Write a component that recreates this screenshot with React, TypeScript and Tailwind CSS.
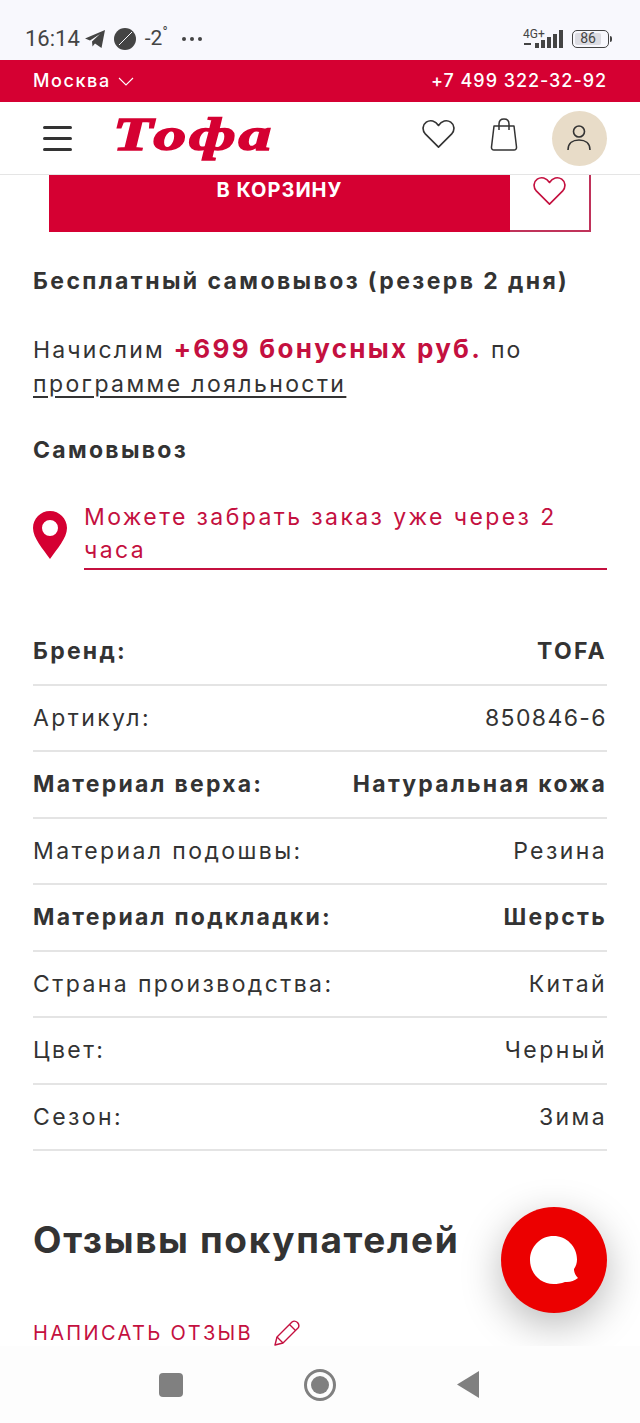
import React from 'react';

const HeartIcon: React.FC<{ className: string }> = ({ className }) => (
    <svg viewBox="0 0 34 30" fill="none" stroke="currentColor" strokeWidth="1.7" strokeLinejoin="round" className={className}>
        <path d="M17 28.5 L3.6 15.2 C-0.2 11.2 0.6 5.4 4.4 2.8 C8.6 0 13.8 1.4 17 6.2 C20.2 1.4 25.4 0 29.6 2.8 C33.4 5.4 34.2 11.2 30.4 15.2 Z" />
    </svg>
);

const specs = [
    { label: 'Бренд:', value: 'TOFA', bold: true },
    { label: 'Артикул:', value: '850846-6', bold: false, digits: true },
    { label: 'Материал верха:', value: 'Натуральная кожа', bold: true },
    { label: 'Материал подошвы:', value: 'Резина', bold: false },
    { label: 'Материал подкладки:', value: 'Шерсть', bold: true },
    { label: 'Страна производства:', value: 'Китай', bold: false },
    { label: 'Цвет:', value: 'Черный', bold: false },
    { label: 'Сезон:', value: 'Зима', bold: false },
];

export default function App() {
    return (
        <div className="w-[640px] h-[1423px] overflow-hidden flex flex-col bg-white text-[#333333] font-['Inter',sans-serif]">
            {/* Status bar */}
            <div className="h-[60px] shrink-0 bg-[#f8f8fd] flex items-center justify-between pt-[17px] pl-[25px] pr-[28px] text-[#444444] font-['Roboto',sans-serif]">
                <div className="flex items-center">
                    <span className="text-[22px] leading-none">16:14</span>
                    <svg viewBox="0 0 20 18" className="w-[20px] h-[18px] ml-[5px] fill-current">
                        <path d="M0 8.5 L20 0 L16.5 18 L10 13.5 L7.5 16.5 L7 11.5 L15 4 L5 10.5 Z" />
                    </svg>
                    <svg viewBox="0 0 22 22" className="w-[22px] h-[22px] ml-[9px]">
                        <circle cx="11" cy="11" r="11" fill="currentColor" />
                        <path d="M5 17 L18 4" stroke="#f8f8fd" strokeWidth="1" />
                    </svg>
                    <span className="text-[21px] leading-none ml-[9px]">-2</span>
                    <span className="text-[14px] leading-none -mt-[14px]">°</span>
                    <div className="flex gap-[4px] ml-[14px]">
                        <span className="w-[4px] h-[4px] rounded-full bg-[#444444]" />
                        <span className="w-[4px] h-[4px] rounded-full bg-[#444444]" />
                        <span className="w-[4px] h-[4px] rounded-full bg-[#444444]" />
                    </div>
                </div>
                <div className="flex items-center gap-[8px]">
                    <div className="relative w-[41px] h-[18px]">
                        <span className="absolute left-0 -top-[2px] text-[12px] leading-none">4G+</span>
                        <svg viewBox="0 0 41 18" className="w-[41px] h-[18px] fill-current">
                            <rect x="1" y="13" width="7" height="2" />
                            <rect x="12" y="13" width="4" height="5" />
                            <rect x="18" y="10" width="4" height="8" />
                            <rect x="24" y="7" width="4" height="11" />
                            <rect x="30" y="4" width="4" height="14" />
                            <rect x="36" y="0" width="4" height="18" />
                        </svg>
                    </div>
                    <div className="flex items-center gap-[1px]">
                        <div className="w-[37px] h-[18px] rounded-[5px] border-[1.5px] border-[#444444] p-[2px] flex">
                            <div className="w-[26px] bg-[#dcdce2] rounded-[2px] text-[14px] leading-[11px] text-center">86</div>
                        </div>
                        <span className="w-[2px] h-[6px] bg-[#444444] rounded-r" />
                    </div>
                </div>
            </div>

            {/* City and phone */}
            <div className="h-[42px] shrink-0 bg-[#d50032] text-white flex items-center justify-between px-[33px] pb-[2px] text-[18px] font-medium tracking-[1.6px]">
                <div className="flex items-center gap-[7px]">
                    <span>Москва</span>
                    <svg viewBox="0 0 16 9" fill="none" stroke="currentColor" strokeWidth="1.1" className="w-[16px] h-[9px] mt-[3px]">
                        <path d="M1 1 L8 8 L15 1" />
                    </svg>
                </div>
                <span className="tracking-[0.95px]">+7 499 322-32-92</span>
            </div>

            {/* Header */}
            <div className="h-[73px] shrink-0 bg-white border-b border-[#e5e5e5] flex items-center pl-[43px] pr-[33px]">
                <div className="w-[29px] flex flex-col gap-[8px]">
                    <span className="h-[3px] rounded-full bg-[#333333]" />
                    <span className="h-[3px] rounded-full bg-[#333333]" />
                    <span className="h-[3px] rounded-full bg-[#333333]" />
                </div>
                <span className="ml-[41px] w-[164px] origin-left scale-x-[1.42] text-[#d50032] font-['Liberation_Serif',serif] font-bold italic text-[46px] tracking-[2px] leading-none [-webkit-text-stroke:1.6px_#d50032] -mt-[6px]">Тофа</span>
                <HeartIcon className="w-[33px] h-[30px] ml-auto -mt-[8px]" />
                <svg viewBox="0 0 28 33" fill="none" stroke="currentColor" strokeWidth="1.5" strokeLinejoin="round" className="w-[28px] h-[33px] ml-[35px] -mt-[8px]">
                    <path d="M4 8 H24 L26.5 29 C26.7 31 25.5 32 24 32 H4 C2.5 32 1.3 31 1.5 29 Z" />
                    <path d="M9 12 V6 C9 3 11 1 14 1 C17 1 19 3 19 6 V12" />
                </svg>
                <div className="w-[55px] h-[55px] ml-[34px] rounded-full bg-[#e8dcc8] flex items-center justify-center pr-[2px]">
                    <svg viewBox="0 0 24 26" fill="none" stroke="currentColor" strokeWidth="1.6" className="w-[24px] h-[26px]">
                        <circle cx="12" cy="6.5" r="5.5" />
                        <path d="M1 25 C1 18 6 15 12 15 C18 15 23 18 23 25" />
                    </svg>
                </div>
            </div>

            {/* Page */}
            <div className="relative flex-1 min-h-0 overflow-hidden">
                <div className="ml-[49px] w-[542px] h-[57px] flex">
                    <div className="w-[461px] bg-[#d50032] text-white font-bold text-[20px] leading-[30px] tracking-[1px] text-center">В КОРЗИНУ</div>
                    <div className="flex-1 border-r-2 border-b-2 border-[#c0325a] flex justify-center pt-[1px] text-[#c4103f]">
                        <HeartIcon className="w-[33px] h-[30px]" />
                    </div>
                </div>

                <div className="px-[33px]">
                    <p className="mt-[33px] text-[23px] leading-[32px] font-bold tracking-[2.4px]">Бесплатный самовывоз (резерв 2 дня)</p>
                    <p className="mt-[35px] text-[23px] leading-[34px] tracking-[2.15px]">
                        Начислим <span className="font-bold text-[#c4103f] text-[26px] tracking-[2.3px]">+699 бонусных руб.</span> по<br />
                        <span className="underline underline-offset-[4px] tracking-[2.4px]">программе лояльности</span>
                    </p>
                    <p className="mt-[33px] text-[23px] leading-[32px] font-bold tracking-[2.3px]">Самовывоз</p>

                    <div className="mt-[35px] flex items-start">
                        <svg viewBox="0 0 34 48" className="w-[34px] h-[48px] mt-[10px] shrink-0 fill-[#d50032]">
                            <path fillRule="evenodd" d="M17 0 C7.6 0 0 7.6 0 17 C0 27 10 38 17 48 C24 38 34 27 34 17 C34 7.6 26.4 0 17 0 Z M17 9 A8 8 0 1 1 17 25 A8 8 0 1 1 17 9 Z" />
                        </svg>
                        <p className="ml-[17px] flex-1 pb-[1px] border-b-2 border-[#c4103f] text-[#c4103f] text-[23px] leading-[33px] tracking-[2.4px]">Можете забрать заказ уже через 2 часа</p>
                    </div>

                    <div className="mt-[49px]">
                        {specs.map((row) => (
                            <div key={row.label} className={`h-[66.5px] flex items-center justify-between border-b-2 border-[#e4e4e4] text-[23px] ${row.bold ? 'font-bold tracking-[2.25px]' : 'tracking-[2.4px]'}`}>
                                <span>{row.label}</span>
                                <span className={row.digits ? 'tracking-[1.4px]' : ''}>{row.value}</span>
                            </div>
                        ))}
                    </div>

                    <h2 className="mt-[61px] text-[37px] leading-[56px] font-bold tracking-[1.65px]">Отзывы покупателей</h2>

                    <div className="mt-[47px] flex items-center text-[#c4103f]">
                        <span className="text-[20px] leading-[36px] tracking-[2.35px]">НАПИСАТЬ ОТЗЫВ</span>
                        <svg viewBox="0 0 26 26" fill="none" stroke="currentColor" strokeWidth="1.4" strokeLinejoin="round" className="w-[26px] h-[26px] ml-[21px]">
                            <path d="M1 25 L3 17 L18 2 C19.5 0.8 21.5 0.8 23.5 2.5 C25.2 4.5 25.2 6.5 24 8 L9 23 Z" />
                            <path d="M3 17 L9 23 M15.5 4.5 L21.5 10.5" />
                        </svg>
                    </div>
                </div>

                {/* Chat button */}
                <div className="absolute left-[501px] top-[1032px] w-[106px] h-[106px] rounded-full bg-[#ec0000] shadow-[0_12px_40px_rgba(0,0,0,0.28)] flex items-center justify-center">
                    <svg viewBox="0 0 48 48" className="w-[48px] h-[48px] fill-white">
                        <path d="M23.5 0 C36.5 0 47 10.5 47 23.5 C47 27 46 30 44 33 C44 36 45 39 48 42 C44 45 40 46.5 35 46 C31 47.5 27.5 48 23.5 48 C10.5 48 0 37.5 0 24 C0 10.5 10.5 0 23.5 0 Z" />
                    </svg>
                </div>
            </div>

            {/* Android nav */}
            <div className="h-[77px] shrink-0 bg-[#fdfdfd] relative z-10 flex items-center justify-center gap-[121px] pr-[2px]">
                <span className="w-[24px] h-[24px] rounded-[4px] bg-[#808080]" />
                <span className="w-[32px] h-[32px] rounded-full border-[3px] border-[#808080] flex items-center justify-center">
                    <span className="w-[18px] h-[18px] rounded-full bg-[#808080]" />
                </span>
                <svg viewBox="0 0 22 27" className="w-[22px] h-[27px] fill-[#808080]">
                    <path d="M0 13.5 L22 0 V27 Z" />
                </svg>
            </div>
        </div>
    );
}
